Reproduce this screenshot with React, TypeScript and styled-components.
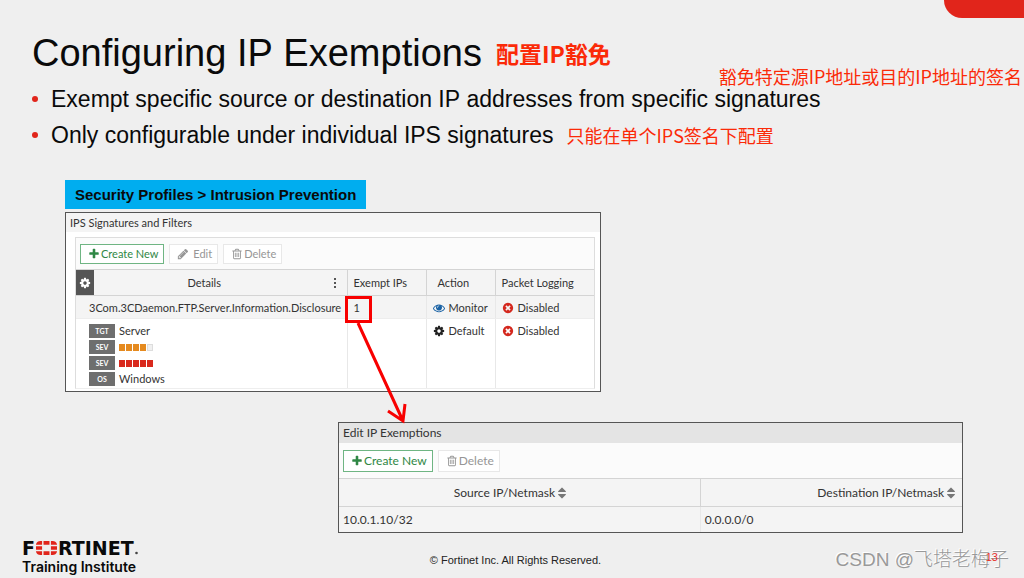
import React from "react";
import styled, { createGlobalStyle } from "styled-components";

const GlobalStyle = createGlobalStyle`
  *, *::before, *::after { box-sizing: border-box; }
  body {
    margin: 0;
    background: #efefef;
    color: #0a0a0a;
    font-family: "Liberation Sans", Arial, sans-serif;
  }
  button { font: inherit; color: inherit; margin: 0; }
  svg { flex-shrink: 0; }
`;

const Slide = styled.div`
  position: relative;
  display: flex;
  flex-direction: column;
  min-height: 100vh;
  overflow: hidden;
`;

const CornerTab = styled.div`
  position: absolute;
  top: 0;
  right: 0;
  width: 80px;
  height: 18px;
  background: #e1251b;
  border-bottom-left-radius: 18px;
`;

const Header = styled.header`
  padding: 30px 32px 0;
`;

const TitleRow = styled.div`
  display: flex;
  align-items: center;
  gap: 14px;
`;

const Title = styled.h1`
  margin: 0;
  font-size: 38px;
  font-weight: 400;
  font-kerning: none;
  line-height: 46px;
`;

const Note = styled.span<{ $strong?: boolean }>`
  color: #fb2a08;
  font-family: "Noto Sans CJK SC", sans-serif;
  font-size: ${(p) => (p.$strong ? 23 : 18)}px;
  font-weight: ${(p) => (p.$strong ? 700 : 400)};
  line-height: 26px;
  white-space: nowrap;
`;

const FloatingNote = styled(Note)`
  position: absolute;
  top: 63px;
  right: 2px;
`;

const Points = styled.ul`
  margin: 5px 0 0;
  padding: 0;
  list-style: none;
`;

const Point = styled.li`
  display: flex;
  align-items: center;
  gap: 13px;
  font-size: 23px;
  font-kerning: none;
  line-height: 36px;

  &::before {
    content: "";
    width: 6px;
    height: 6px;
    border-radius: 50%;
    background: #e1251b;
  }
`;

const Main = styled.main`
  flex: 1;
  padding: 27px 61px 0 65px;
`;

const Breadcrumb = styled.div`
  width: max-content;
  margin-bottom: 3px;
  padding: 0 10px;
  background: #00adef;
  font-size: 15px;
  font-weight: 700;
  line-height: 29px;
`;

const Panel = styled.section`
  border: 1px solid #555;
  background: #fff;
  color: #333;
  font-family: Lato, sans-serif;
`;

const SignaturePanel = styled(Panel)`
  max-width: 536px;
  font-size: 11px;
`;

const ExemptionPanel = styled(Panel)`
  margin: 30px 0 0 273px;
  background: #f4f4f4;
  font-size: 12px;
`;

const PanelTitle = styled.h2<{ $dark?: boolean }>`
  margin: 0;
  padding: 0 4px;
  background: ${(p) => (p.$dark ? "#e4e4e4" : "#f4f4f4")};
  font-size: inherit;
  font-weight: 400;
  line-height: ${(p) => (p.$dark ? 20 : 19)}px;
`;

const Listing = styled.div`
  margin: 5px 5px 2px 9px;
  border: 1px solid #ddd;
  border-bottom-color: #eee;
`;

const Toolbar = styled.div<{ $tall?: boolean }>`
  display: flex;
  align-items: center;
  gap: 5px;
  height: ${(p) => (p.$tall ? 35 : 31)}px;
  padding: 0 4px;
  background: #fbfbfb;
`;

const ToolButton = styled.button<{ $primary?: boolean; $tall?: boolean }>`
  display: flex;
  align-items: center;
  gap: 1px;
  height: ${(p) => (p.$tall ? 22 : 20)}px;
  padding: 0 5px 0 7px;
  border: 1px solid ${(p) => (p.$primary ? "#6fb583" : "#e8e8e8")};
  background: #fff;
  color: ${(p) => (p.$primary ? "#2f8745" : "#969696")};
  white-space: nowrap;
`;

const Table = styled.table`
  width: 100%;
  border-collapse: collapse;
  table-layout: fixed;
`;

const Th = styled.th`
  height: 26px;
  padding: 0 6px;
  border-top: 1px solid #d4d4d4;
  border-bottom: 1px solid #d4d4d4;
  border-left: 1px solid #d4d4d4;
  background: #f4f4f4;
  font-weight: 400;
  text-align: left;
  white-space: nowrap;

  &:first-child { border-left: 0; }
`;

const ActionTh = styled(Th)`
  padding-left: 11px;
`;

const AddressTh = styled(Th)`
  height: 28px;
  padding: 0 4px;
  text-align: right;

  &:first-child {
    padding-right: 20px;
    text-align: center;
  }
`;

const Td = styled.td<{ $shaded?: boolean }>`
  position: relative;
  padding: 4px 6px 2px;
  border-left: 1px solid #e8e8e8;
  border-bottom: 1px solid #ededed;
  background: ${(p) => (p.$shaded ? "#f4f4f4" : "#fff")};
  line-height: 16px;
  vertical-align: top;
  white-space: nowrap;

  &:first-child { border-left: 0; }
  tr:last-child > & { border-bottom: 0; }
`;

const DetailCell = styled(Td)`
  padding-left: 13px;
`;

const ExemptionCell = styled(Td)`
  padding: 5px 4px 4px;
`;

const DetailHead = styled.div`
  display: flex;
  align-items: center;
  height: 25px;
  margin: 0 -6px;
`;

const DetailLabel = styled.span`
  flex: 1;
  padding-right: 8px;
  text-align: center;
`;

const GearButton = styled.button`
  display: grid;
  place-items: center;
  width: 18px;
  height: 25px;
  padding: 0;
  border: 0;
  background: #555;
  color: #fff;
`;

const MenuButton = styled.button`
  width: 24px;
  padding: 0;
  border: 0;
  background: none;
  line-height: 0;
`;

const SortButton = styled.button`
  display: inline-flex;
  align-items: center;
  padding: 0;
  border: 0;
  background: none;
`;

const Status = styled.span`
  display: flex;
  align-items: center;
  gap: 4px;
`;

const Tags = styled.dl`
  display: grid;
  grid-template-columns: 26px 1fr;
  gap: 2px 4px;
  margin: 1px 0 0;
`;

const Tag = styled.dt`
  align-self: center;
  height: 14px;
  background: #6e6e6e;
  color: #fff;
  font-size: 7px;
  font-weight: 700;
  line-height: 14px;
  text-align: center;
`;

const TagValue = styled.dd`
  display: flex;
  align-items: center;
  height: 14px;
  margin: 0;
`;

const Meter = styled.span`
  display: flex;
  gap: 1px;
`;

const Pip = styled.span<{ $color: string }>`
  width: 6px;
  height: 7px;
  background: ${(p) => p.$color};
  box-shadow: ${(p) => (p.$color === "#f0f0f0" ? "inset 0 0 0 1px #ddd" : "none")};
`;

const Highlight = styled.span`
  position: absolute;
  z-index: 1;
  top: 0;
  left: -3px;
  width: 27px;
  height: 27px;
  border: 3px solid #f80000;
`;

const Arrow = styled.svg`
  position: absolute;
  top: 22px;
  left: 6px;
  overflow: visible;
  pointer-events: none;
`;

const Footer = styled.footer`
  display: grid;
  grid-template-columns: 1fr auto 1fr;
  align-items: end;
  padding: 0 15px 1px 22px;
`;

const Brand = styled.div`
  color: #0a0a0a;
`;

const Wordmark = styled.div`
  display: flex;
  align-items: center;
  height: 16px;
  gap: 1px;
  font-family: "DejaVu Sans", sans-serif;
  font-size: 19px;
  font-weight: 700;
  line-height: 16px;
`;

const Institute = styled.div`
  font-family: Inter, sans-serif;
  font-size: 14px;
  font-weight: 600;
  line-height: 21px;
`;

const Copyright = styled.p`
  margin: 0 0 10px;
  color: #222;
  font-size: 11px;
  line-height: 14px;
`;

const Signature = styled.div`
  position: relative;
  justify-self: end;
  margin-bottom: 4px;
  color: #999;
  font-family: "Liberation Sans", "Noto Sans CJK SC", sans-serif;
  font-size: 19px;
  font-weight: 300;
  line-height: 26px;
  text-shadow: -1px -1px 0 #fff;
  white-space: nowrap;
`;

const PageNumber = styled.span`
  position: absolute;
  top: 3px;
  right: 11px;
  color: #e8302a;
  font-size: 11px;
  line-height: 14px;
  text-shadow: none;
`;

const paths = {
  plus: "M1600 736v192q0 40-28 68t-68 28h-416v416q0 40-28 68t-68 28h-192q-40 0-68-28t-28-68v-416h-416q-40 0-68-28t-28-68v-192q0-40 28-68t68-28h416v-416q0-40 28-68t68-28h192q40 0 68 28t28 68v416h416q40 0 68 28t28 68z",
  trash: "M704 736v576q0 14-9 23t-23 9h-64q-14 0-23-9t-9-23v-576q0-14 9-23t23-9h64q14 0 23 9t9 23zm256 0v576q0 14-9 23t-23 9h-64q-14 0-23-9t-9-23v-576q0-14 9-23t23-9h64q14 0 23 9t9 23zm256 0v576q0 14-9 23t-23 9h-64q-14 0-23-9t-9-23v-576q0-14 9-23t23-9h64q14 0 23 9t9 23zm128 724v-948h-896v948q0 22 7 40.500t14.500 27 10.500 8.500h832q3 0 10.500-8.500t14.500-27 7-40.500zm-672-1076h448l-48-117q-7-9-17-11h-317q-10 2-17 11zm928 32v64q0 14-9 23t-23 9h-96v948q0 83-47 143.500t-113 60.500h-832q-66 0-113-58.500t-47-141.500v-952h-96q-14 0-23-9t-9-23v-64q0-14 9-23t23-9h309l70-167q15-37 54-63t79-26h320q40 0 79 26t54 63l70 167h309q14 0 23 9t9 23z",
  pencil: "M491 1536l91-91-235-235-91 91v107h128v128h107zm523-928q0-22-22-22-10 0-17 7l-542 542q-7 7-7 17 0 22 22 22 10 0 17-7l542-542q7-7 7-17zm-54-192l416 416-832 832h-416v-416zm683 96q0 53-37 90l-166 166-416-416 166-165q36-38 90-38 53 0 91 38l235 234q37 39 37 91z",
  cross: "M1277 1122q0-26-19-45l-181-181 181-181q19-19 19-45 0-27-19-46l-90-90q-19-19-46-19-26 0-45 19l-181 181-181-181q-19-19-45-19-27 0-46 19l-90 90q-19 19-19 46 0 26 19 45l181 181-181 181q-19 19-19 45 0 27 19 46l90 90q19 19 46 19 26 0 45-19l181-181 181 181q19 19 45 19 27 0 46-19l90-90q19-19 19-46zm387-226q0 209-103 385.500t-279.500 279.500-385.500 103-385.500-103-279.500-279.500-103-385.500 103-385.500 279.500-279.500 385.500-103 385.500 103 279.500 279.500 103 385.500z",
  eye: "M1664 960q-152-236-381-353 61 104 61 225 0 185-131.500 316.500t-316.500 131.500-316.500-131.500-131.500-316.500q0-121 61-225-229 117-381 353 133 205 333.500 326.500t434.500 121.500 434.500-121.500 333.500-326.500zm-720-384q0-20-14-34t-34-14q-125 0-214.500 89.500t-89.500 214.500q0 20 14 34t34 14 34-14 14-34q0-86 61-147t147-61q20 0 34-14t14-34zm848 384q0 34-20 69-140 230-376.500 368.500t-499.500 138.500-499.500-139-376.500-368q-20-35-20-69t20-69q140-229 376.500-368t499.500-139 499.500 139 376.500 368q20 35 20 69z",
  cog: "M1152 896q0-106-75-181t-181-75-181 75-75 181 75 181 181 75 181-75 75-181zm512-109v222q0 12-8 23t-20 13l-185 28q-19 54-39 91 35 50 107 138 10 12 10 25t-9 23q-27 37-99 108t-94 71q-12 0-26-9l-138-108q-44 23-91 38-16 136-29 186-7 28-36 28h-222q-14 0-24.500-8.500t-11.500-21.500l-28-184q-49-16-90-37l-141 107q-10 9-25 9-14 0-25-11-126-114-165-168-7-10-7-23 0-12 8-23 15-21 51-66.500t54-70.500q-27-50-41-99l-183-27q-13-2-21-12.500t-8-23.500v-222q0-12 8-23t19-13l186-28q14-46 39-92-40-57-107-138-10-12-10-24 0-10 9-23 26-36 98.500-107.500t94.500-71.500q13 0 26 10l138 107q44-23 91-38 16-136 29-186 7-28 36-28h222q14 0 24.500 8.500t11.500 21.500l28 184q49 16 90 37l142-107q9-9 24-9 13 0 25 10 129 119 165 170 7 8 7 22 0 12-8 23-15 21-51 66.500t-54 70.500q26 50 41 98l183 28q13 2 21 12.500t8 23.500z",
  sort: "M1408 1088q0 26-19 45l-448 448q-19 19-45 19t-45-19l-448-448q-19-19-19-45t19-45 45-19h896q26 0 45 19t19 45zm0-384q0 26-19 45t-45 19h-896q-26 0-45-19t-19-45 19-45l448-448q19-19 45-19t45 19l448 448q19 19 19 45z",
};

function Icon({ name, size = 12, color = "currentColor" }: { name: keyof typeof paths; size?: number; color?: string }) {
  return (
    <svg width={size} height={size} viewBox="0 0 1792 1792" fill={color} aria-hidden="true">
      <path d={paths[name]} />
    </svg>
  );
}

function Severity({ level, color }: { level: number; color: string }) {
  return (
    <Meter role="img" aria-label={`Severity ${level} of 5`}>
      {[1, 2, 3, 4, 5].map((n) => (
        <Pip key={n} $color={n <= level ? color : "#f0f0f0"} />
      ))}
    </Meter>
  );
}

function LogoMark() {
  return (
    <svg width="21" height="14" viewBox="0 0 19 13" preserveAspectRatio="none" fill="#e1251b" aria-hidden="true">
      <path d="M4 0H5.500V3.500H0V3Q1 0 4 0ZM6.800 0H12.200V3.500H6.800ZM13.500 0H15Q18 0 19 3V3.500H13.500ZM0 4.800H5.500V8.200H0ZM13.500 4.800H19V8.200H13.500ZM0 9.500H5.500V13H4Q1 13 0 10ZM6.800 9.500H12.200V13H6.800ZM13.500 9.500H19V10Q18 13 15 13H13.500Z" />
    </svg>
  );
}

function RegisteredDot() {
  return (
    <svg width="3" height="14" viewBox="0 0 3 14" fill="#444" aria-hidden="true">
      <circle cx="1.500" cy="12" r="1.300" />
    </svg>
  );
}

const disabled = (
  <Status>
    <Icon name="cross" color="#d4281e" />
    Disabled
  </Status>
);

export default function App() {
  return (
    <Slide>
      <GlobalStyle />
      <CornerTab />
      <Header>
        <TitleRow>
          <Title>Configuring IP Exemptions</Title>
          <Note $strong>配置IP豁免</Note>
        </TitleRow>
        <FloatingNote>豁免特定源IP地址或目的IP地址的签名</FloatingNote>
        <Points>
          <Point>Exempt specific source or destination IP addresses from specific signatures</Point>
          <Point>
            Only configurable under individual IPS signatures
            <Note>只能在单个IPS签名下配置</Note>
          </Point>
        </Points>
      </Header>

      <Main>
        <Breadcrumb>Security Profiles &gt; Intrusion Prevention</Breadcrumb>
        <SignaturePanel>
          <PanelTitle>IPS Signatures and Filters</PanelTitle>
          <Listing>
            <Toolbar>
              <ToolButton type="button" $primary><Icon name="plus" />Create New</ToolButton>
              <ToolButton type="button"><Icon name="pencil" />&nbsp;Edit</ToolButton>
              <ToolButton type="button"><Icon name="trash" />Delete</ToolButton>
            </Toolbar>
            <Table>
              <colgroup>
                <col />
                <col width="79" />
                <col width="69" />
                <col width="99" />
              </colgroup>
              <thead>
                <tr>
                  <Th>
                    <DetailHead>
                      <GearButton type="button" aria-label="Configure columns"><Icon name="cog" /></GearButton>
                      <DetailLabel>Details</DetailLabel>
                      <MenuButton type="button" aria-label="Column menu">
                        <svg width="4" height="10" viewBox="0 0 4 10" fill="#555">
                          <path d="M1 0h2v2H1zM1 4h2v2H1zM1 8h2v2H1z" />
                        </svg>
                      </MenuButton>
                    </DetailHead>
                  </Th>
                  <Th>Exempt IPs</Th>
                  <ActionTh>Action</ActionTh>
                  <Th>Packet Logging</Th>
                </tr>
              </thead>
              <tbody>
                <tr>
                  <DetailCell $shaded>3Com.3CDaemon.FTP.Server.Information.Disclosure</DetailCell>
                  <Td $shaded>
                    1
                    <Highlight>
                      <Arrow width="50" height="102" fill="none" stroke="#f80000" strokeWidth="3" aria-hidden="true">
                        <path d="M4 2L49 100M34 90L49 100L51 83" />
                      </Arrow>
                    </Highlight>
                  </Td>
                  <Td $shaded><Status><Icon name="eye" color="#1b63a5" />Monitor</Status></Td>
                  <Td $shaded>{disabled}</Td>
                </tr>
                <tr>
                  <DetailCell>
                    <Tags>
                      <Tag>TGT</Tag>
                      <TagValue>Server</TagValue>
                      <Tag>SEV</Tag>
                      <TagValue><Severity level={4} color="#e58a1f" /></TagValue>
                      <Tag>SEV</Tag>
                      <TagValue><Severity level={5} color="#d9291c" /></TagValue>
                      <Tag>OS</Tag>
                      <TagValue>Windows</TagValue>
                    </Tags>
                  </DetailCell>
                  <Td />
                  <Td><Status><Icon name="cog" color="#222" />Default</Status></Td>
                  <Td>{disabled}</Td>
                </tr>
              </tbody>
            </Table>
          </Listing>
        </SignaturePanel>

        <ExemptionPanel>
          <PanelTitle $dark>Edit IP Exemptions</PanelTitle>
          <Toolbar $tall>
            <ToolButton type="button" $primary $tall><Icon name="plus" />Create New</ToolButton>
            <ToolButton type="button" $tall><Icon name="trash" />Delete</ToolButton>
          </Toolbar>
          <Table>
            <colgroup>
              <col width="58%" />
              <col />
            </colgroup>
            <thead>
              <tr>
                <AddressTh>
                  <SortButton type="button">Source IP/Netmask<Icon name="sort" size={14} color="#777" /></SortButton>
                </AddressTh>
                <AddressTh>
                  <SortButton type="button">Destination IP/Netmask<Icon name="sort" size={14} color="#777" /></SortButton>
                </AddressTh>
              </tr>
            </thead>
            <tbody>
              <tr>
                <ExemptionCell $shaded>10.0.1.10/32</ExemptionCell>
                <ExemptionCell $shaded>0.0.0.0/0</ExemptionCell>
              </tr>
            </tbody>
          </Table>
        </ExemptionPanel>
      </Main>

      <Footer>
        <Brand>
          <Wordmark aria-label="Fortinet"><span>F</span><LogoMark /><span>RTINET</span><RegisteredDot /></Wordmark>
          <Institute>Training Institute</Institute>
        </Brand>
        <Copyright>© Fortinet Inc. All Rights Reserved.</Copyright>
        <Signature>
          CSDN @飞塔老梅子
          <PageNumber>13</PageNumber>
        </Signature>
      </Footer>
    </Slide>
  );
}
